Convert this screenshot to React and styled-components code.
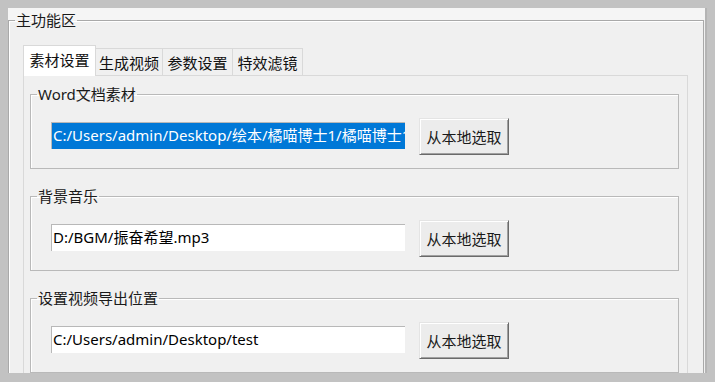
import React from "react";
import styled, { createGlobalStyle } from "styled-components";

const GlobalStyle = createGlobalStyle`
  html, body {
    margin: 0;
    padding: 0;
    background: #c2c2c2;
  }
  body {
    font-family: "Noto Sans", "Noto Sans CJK SC", sans-serif;
    color: #000;
  }
`;

const Screen = styled.div`
  padding: 8px;
  height: 382px;
  box-sizing: border-box;
`;

const Window = styled.div`
  width: 699px;
  height: 365px;
  box-sizing: border-box;
  background: linear-gradient(#f5f5f5 0, #f5f5f5 12px, #f0f0f0 12px);
  overflow: hidden;
  border-right: 2px solid #b4b4b4;
  padding-right: 1px;
`;

const GroupBox = styled.fieldset`
  margin: ${props => props.$margin || "0"};
  padding: ${props => props.$padding || "0"};
  min-width: 0;
  height: ${props => props.$height || "auto"};
  box-sizing: border-box;
  border: 1px solid ${props => props.$line || "#b9b9b9"};
  box-shadow: inset 1px 1px 0 #fff;
`;

const Legend = styled.legend`
  margin-left: ${props => props.$indent || "6px"};
  padding: 0 1px;
  font-size: 15px;
  line-height: 22px;
  color: #1a1a1a;
`;

const TabControl = styled.div`
  margin: 14px 0 0 14px;
  width: 665px;
`;

const TabStrip = styled.div`
  display: flex;
  align-items: flex-end;
  height: 30px;
`;

const Tab = styled.div`
  position: relative;
  width: ${props => props.$w}px;
  height: ${props => (props.$active ? 31 : 27)}px;
  margin-left: ${props => (props.$first ? 0 : -1)}px;
  margin-bottom: ${props => (props.$active ? -1 : 0)}px;
  z-index: ${props => (props.$active ? 2 : 1)};
  box-sizing: border-box;
  border: 1px solid #d9d9d9;
  border-bottom: none;
  background: ${props => (props.$active ? "#ffffff" : "#f0f0f0")};
  display: flex;
  align-items: center;
  justify-content: center;
  font-size: 15px;
  padding-bottom: ${props => (props.$active ? 3 : 0)}px;
  color: #111;
  white-space: nowrap;
`;

const TabPage = styled.div`
  border: 1px solid #d9d9d9;
  height: 330px;
  padding: 7px 8px 0 6px;
  display: flex;
  flex-direction: column;
  gap: 16px;
`;

const FieldRow = styled.div`
  display: flex;
  align-items: flex-start;
  gap: 14px;
  padding: 13px 0 0 20px;
  height: 64px;
  box-sizing: border-box;
`;

const TextBox = styled.div`
  width: 354px;
  height: 27px;
  margin-top: 4px;
  box-sizing: border-box;
  border-top: 1px solid #b8b8b8;
  border-left: 1px solid #b8b8b8;
  background: ${props => (props.$selected ? "#0078d7" : "#ffffff")};
  color: ${props => (props.$selected ? "#ffffff" : "#000000")};
  font-size: 15px;
  line-height: 25px;
  padding-left: 1px;
  white-space: nowrap;
  overflow: hidden;
`;

const Button = styled.div`
  width: 90px;
  height: 37px;
  box-sizing: border-box;
  background: #ececec;
  border: 1px solid;
  border-color: #e4e4e4 #6a6a6a #6a6a6a #e4e4e4;
  box-shadow: inset 1px 1px 0 #ffffff, inset -1px -1px 0 #a0a0a0;
  display: flex;
  align-items: center;
  justify-content: center;
  font-size: 15px;
  color: #1a1a1a;
  white-space: nowrap;
`;

const tabs = [
  { label: "素材设置", w: 73, active: true },
  { label: "生成视频", w: 68 },
  { label: "参数设置", w: 71 },
  { label: "特效滤镜", w: 71 }
];

const fields = [
  { title: "Word文档素材", value: "C:/Users/admin/Desktop/绘本/橘喵博士1/橘喵博士1.docx", selected: true },
  { title: "背景音乐", value: "D:/BGM/振奋希望.mp3" },
  { title: "设置视频导出位置", value: "C:/Users/admin/Desktop/test" }
];

const App = () => (
  <Screen>
    <GlobalStyle />
    <Window>
      <GroupBox $margin="1px 0 0 0" $height="420px" $line="#a9a9a9">
        <Legend $indent="6px">主功能区</Legend>
        <TabControl>
          <TabStrip>
            {tabs.map((t, i) => (
              <Tab key={t.label} $w={t.w} $active={t.active} $first={i === 0}>
                {t.label}
              </Tab>
            ))}
          </TabStrip>
          <TabPage>
            {fields.map(f => (
              <GroupBox key={f.title} $height="86px">
                <Legend>{f.title}</Legend>
                <FieldRow>
                  <TextBox $selected={f.selected}>{f.value}</TextBox>
                  <Button>从本地选取</Button>
                </FieldRow>
              </GroupBox>
            ))}
          </TabPage>
        </TabControl>
      </GroupBox>
    </Window>
  </Screen>
);

export default App;
